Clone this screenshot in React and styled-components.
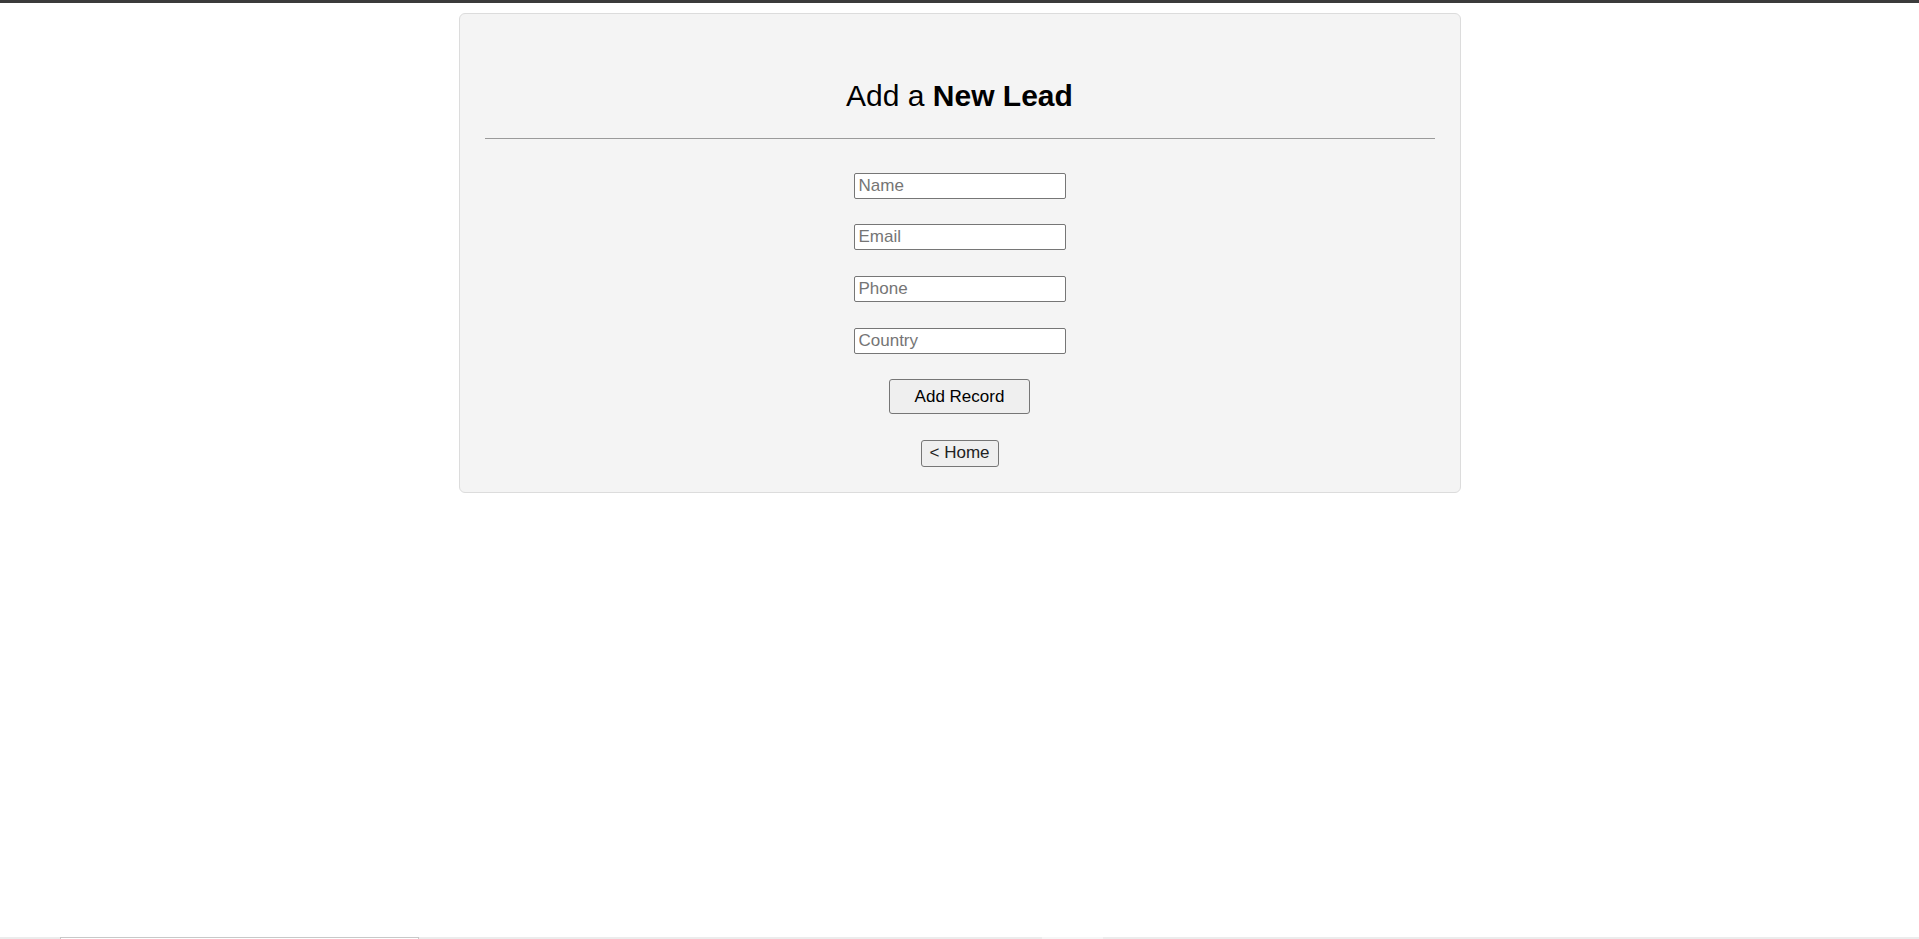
import React from 'react';
import styled, { createGlobalStyle } from 'styled-components';

const GlobalStyle = createGlobalStyle`
  * {
    box-sizing: border-box;
  }
  body {
    margin: 0;
    background: #ffffff;
    font-family: "Liberation Sans", Arial, Helvetica, sans-serif;
  }
`;

const PAGE = styled.div`
  min-height: 100vh;
  display: flex;
  flex-direction: column;
`;

const TOPBAR = styled.div`
  height: 3px;
  background: #3b3b3b;
`;

const CARD = styled.div`
  width: 1002px;
  margin: 10px auto 0;
  padding: 65px 25px 25px;
  background: #f4f4f4;
  border: 1px solid #dcdcdc;
  border-radius: 6px;
  display: flex;
  flex-direction: column;
  align-items: center;
  h1 {
    margin: 0 0 24px;
    font-size: 30px;
    font-weight: 400;
    line-height: 34.5px;
    color: #000;
    text-align: center;
    b {
      font-weight: 700;
    }
  }
`;

const DIVIDER = styled.hr`
  width: 100%;
  margin: 0 0 34px;
  border: 0;
  border-top: 1px solid #9a9a9a;
`;

const FORM = styled.form`
  display: flex;
  flex-direction: column;
  align-items: center;
  gap: 25.7px;
`;

const INPUT = styled.input`
  width: 212px;
  height: 26px;
  padding: 1px 4px;
  font-family: "Liberation Sans", Arial, sans-serif;
  font-size: 17px;
  color: #000;
  background: #fff;
  border: 1px solid #767676;
  border-radius: 2px;
  outline: none;
  ::placeholder {
    color: #757575;
  }
`;

const BUTTON = styled.button`
  height: ${(p) => (p.$small ? '27px' : '35px')};
  padding: ${(p) => (p.$small ? '0 8px' : '0 25px')};
  font-family: "Liberation Sans", Arial, sans-serif;
  font-size: 17px;
  color: ${(p) => (p.$small ? '#222' : '#000')};
  background: #efefef;
  border: 1px solid #767676;
  border-radius: 3px;
  cursor: pointer;
`;

const BOTTOMSTRIP = styled.div`
  margin-top: auto;
  height: 2px;
  background: #ececec;
  display: flex;
  .tab {
    margin-left: 60px;
    width: 359px;
    background: #ffffff;
    border: 1px solid #c8c8c8;
    border-bottom: 0;
  }
  .light {
    margin-left: 623px;
    width: 61px;
    background: #f6f6f6;
  }
`;

const fields = ['Name', 'Email', 'Phone', 'Country'];

const App = () => {
  return (
    <PAGE>
      <GlobalStyle />
      <TOPBAR />
      <CARD>
        <h1>
          Add a <b>New Lead</b>
        </h1>
        <DIVIDER />
        <FORM onSubmit={(e) => e.preventDefault()}>
          {fields.map((f) => (
            <INPUT key={f} type="text" placeholder={f} name={f.toLowerCase()} />
          ))}
          <BUTTON type="submit">Add Record</BUTTON>
          <BUTTON type="button" $small>
            &lt; Home
          </BUTTON>
        </FORM>
      </CARD>
      <BOTTOMSTRIP>
        <div className="tab" />
        <div className="light" />
      </BOTTOMSTRIP>
    </PAGE>
  );
};

export default App;
